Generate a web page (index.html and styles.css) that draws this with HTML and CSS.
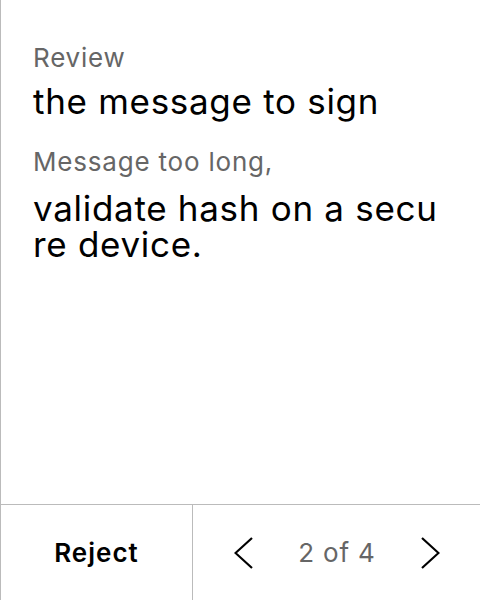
FILE: index.html
```html
<!DOCTYPE html>
<html>
<head>
<meta charset="utf-8">
<link rel="stylesheet" href="styles.css">
</head>
<body>
<div class="screen">
  <main class="content">
    <div class="label">Review</div>
    <div class="value first">the message to sign</div>
    <div class="label second">Message too long,</div>
    <div class="value">validate hash on a secure device.</div>
  </main>
  <footer class="footer">
    <div class="reject">Reject</div>
    <div class="nav">
      <svg class="chev" width="20" height="32" viewBox="0 0 20 32"><polyline points="18,1 1.5,16 18,31" fill="none" stroke="#000" stroke-width="2.2"/></svg>
      <span class="page">2 of 4</span>
      <svg class="chev" width="20" height="32" viewBox="0 0 20 32"><polyline points="2,1 18.5,16 2,31" fill="none" stroke="#000" stroke-width="2.2"/></svg>
    </div>
  </footer>
</div>
</body>
</html>
```
FILE: styles.css
```css
html, body {
  margin: 0;
  padding: 0;
  background: #fff;
}
.screen {
  width: 479px;
  height: 600px;
  border-left: 1px solid #bbb;
  display: flex;
  flex-direction: column;
  font-family: Inter, "Noto Sans", sans-serif;
  color: #000;
}
.content {
  flex: 1;
  padding: 42px 30px 0 32px;
}
.label {
  font-size: 26px;
  line-height: 32px;
  letter-spacing: 0.8px;
  color: #666;
}
.label.second {
  margin-top: 27px;
}
.value {
  font-size: 35px;
  line-height: 36px;
  letter-spacing: 0.7px;
  margin-top: 12px;
  word-break: break-all;
}
.value.first {
  margin-top: 9px;
}
.footer {
  height: 95px;
  border-top: 1px solid #bbb;
  display: flex;
}
.reject {
  width: 191px;
  border-right: 1px solid #bbb;
  display: flex;
  align-items: center;
  justify-content: center;
  font-size: 26px;
  font-weight: 600;
  letter-spacing: 1px;
}
.nav {
  flex: 1;
  display: flex;
  align-items: center;
  justify-content: space-between;
  padding: 0 40px 0 41px;
}
.page {
  font-size: 26px;
  letter-spacing: 0.8px;
  color: #666;
}
.chev {
  display: block;
}
```
